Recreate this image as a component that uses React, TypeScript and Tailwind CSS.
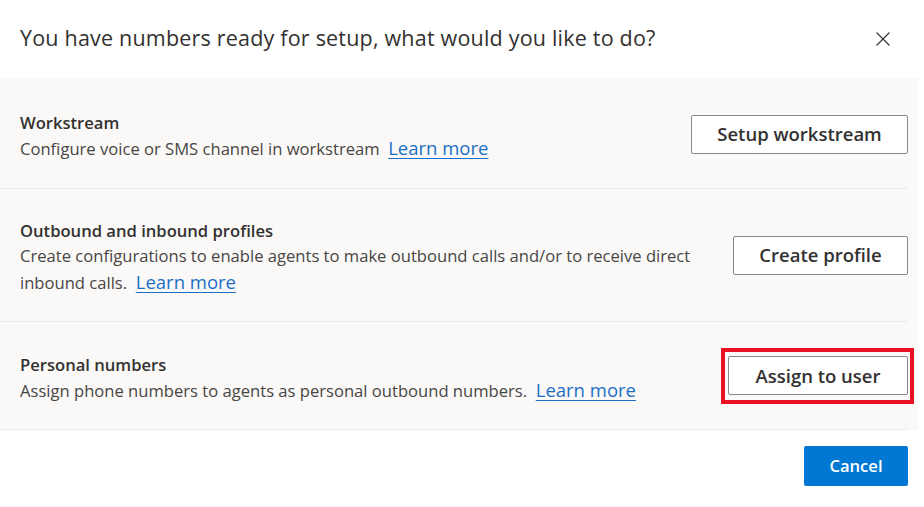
import React from "react";

const font = { fontFamily: '"Open Sans", "Noto Sans", sans-serif' };

function Link() {
  return (
    <a href="#" className="text-[#1a6fc4] text-[18.5px] leading-[26px] underline underline-offset-[3px] decoration-1">
      Learn more
    </a>
  );
}

function OutlineButton({ label, width }: { label: string; width: string }) {
  return (
    <button
      className={`h-[39px] ${width} bg-white border border-[#8a8886] rounded-[2px] text-[18.5px] font-semibold text-[#323130]`}
    >
      {label}
    </button>
  );
}

export default function App() {
  return (
    <div className="w-[924px] h-[507px] bg-white relative overflow-hidden" style={font}>
      <div className="h-[78px] flex items-center justify-between pl-5 pr-[33px]">
        <h1 className="text-[21.5px] text-[#323130] tracking-[0.2px] pb-[1px]">
          You have numbers ready for setup, what would you like to do?
        </h1>
        <button className="w-4 h-4 flex items-center justify-center text-[#323130]" aria-label="Close">
          <svg width="16" height="16" viewBox="0 0 16 16" fill="none" stroke="currentColor" strokeWidth="1.1">
            <path d="M1.5 1.5 L14.5 14.5 M14.5 1.5 L1.5 14.5" />
          </svg>
        </button>
      </div>

      <div className="w-[918px] bg-[#faf9f8] text-[16.6px]">
        <div className="h-[111px] flex items-center justify-between pl-5 border-b border-[#edebe9] mr-[10px]">
          <div className="flex flex-col pt-[6px]">
            <div className="font-semibold text-[#323130] leading-[25px]">Workstream</div>
            <div className="text-[#484644] leading-[26px]">
              Configure voice or SMS channel in workstream&nbsp;&nbsp;<Link />
            </div>
          </div>
          <div className="pt-[2px]">
            <OutlineButton label="Setup workstream" width="w-[217px]" />
          </div>
        </div>

        <div className="h-[133px] flex items-center justify-between pl-5 border-b border-[#edebe9] mr-[10px]">
          <div className="flex flex-col w-[690px] pt-[3px]">
            <div className="font-semibold text-[#323130] leading-[25px]">Outbound and inbound profiles</div>
            <div className="text-[#484644] leading-[26px]">
              Create configurations to enable agents to make outbound calls and/or to receive direct inbound calls.&nbsp;&nbsp;<Link />
            </div>
          </div>
          <OutlineButton label="Create profile" width="w-[175px]" />
        </div>

        <div className="h-[108px] flex items-center justify-between pl-5 border-b border-[#edebe9] mr-[10px]">
          <div className="flex flex-col pt-[5px]">
            <div className="font-semibold text-[#323130] leading-[25px]">Personal numbers</div>
            <div className="text-[#484644] leading-[26px]">
              Assign phone numbers to agents as personal outbound numbers.&nbsp;&nbsp;<Link />
            </div>
          </div>
          <div className="relative">
            <OutlineButton label="Assign to user" width="w-[180px]" />
            <span className="absolute left-[-7px] right-[-6px] top-[-8px] bottom-[-9px] border-4 border-[#e81123] pointer-events-none" />
          </div>
        </div>
      </div>

      <div className="flex justify-end pr-[16px] pt-[16px]">
        <button className="w-[104px] h-[40px] bg-[#0078d4] rounded-[2px] text-white text-[16.6px] font-semibold">
          Cancel
        </button>
      </div>
    </div>
  );
}
